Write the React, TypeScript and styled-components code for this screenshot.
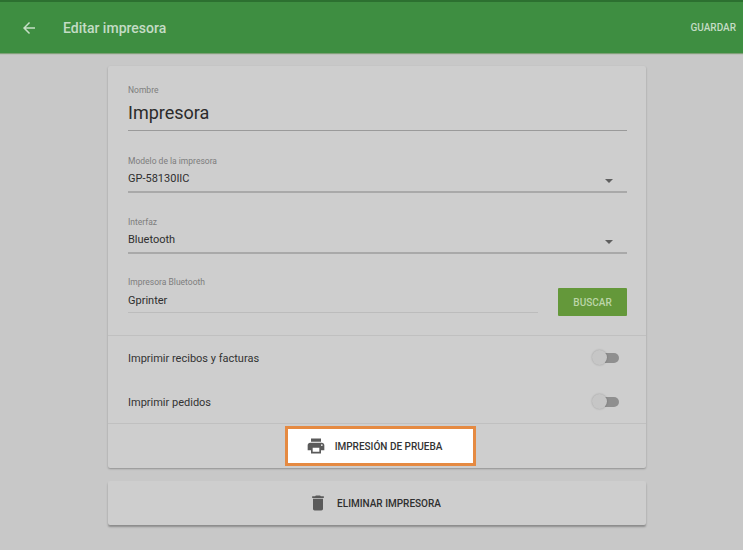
import React from "react";
import styled, { createGlobalStyle } from "styled-components";

const GlobalStyle = createGlobalStyle`
  html, body {
    margin: 0;
    padding: 0;
    height: 100%;
    overflow: hidden;
    background: #c8c8c8;
    font-family: Roboto, "Liberation Sans", sans-serif;
  }
`;

const Page = styled.div`
  width: 743px;
  height: 550px;
  display: flex;
  flex-direction: column;
  background: linear-gradient(#c4c4c8 0, #c8c8c8 30px);
`;

const TopBar = styled.header`
  height: 51px;
  flex: none;
  display: flex;
  align-items: center;
  background: #3e8e41;
  border-top: 2px solid #2c7030;
  box-shadow: 0 1px 1px rgba(110, 150, 100, 0.8);
`;

const BackButton = styled.div`
  width: 63px;
  padding-left: 20px;
  box-sizing: border-box;
  display: flex;
  color: #c6dfc6;
`;

const Title = styled.div`
  flex: 1;
  font-size: 14px;
  font-weight: 500;
  color: #c4dcc5;
`;

const SaveAction = styled.div`
  font-size: 10px;
  font-weight: 500;
  color: #c4dcc5;
  padding-right: 7px;
`;

const Content = styled.main`
  width: 538px;
  margin: 13px 0 0 108px;
  display: flex;
  flex-direction: column;
  gap: 13px;
`;

const Card = styled.section`
  background: #cecece;
  border-radius: 2px;
  box-shadow: 0 1px 2px rgba(0, 0, 0, 0.28);
`;

const Fields = styled.div`
  padding: 19px 19px 0 20px;
  height: 250px;
  border-bottom: 1px solid #c0c0c0;
  display: flex;
  flex-direction: column;
`;

const Field = styled.div<{ $height: number }>`
  height: ${(p) => p.$height}px;
  flex: none;
  display: flex;
  flex-direction: column;
`;

const Label = styled.label`
  font-size: 8.5px;
  line-height: 10px;
  color: #7d7d7d;
`;

const NameInput = styled.div`
  font-size: 18px;
  line-height: 24px;
  margin-top: 6px;
  padding-bottom: 5px;
  color: #2b2b2b;
  border-bottom: 1px solid #9a9a9a;
`;

const SelectValue = styled.div`
  font-size: 11px;
  line-height: 14px;
  margin-top: 6px;
  padding-bottom: 5px;
  color: #2e2e2e;
  border-bottom: 2px solid #a9a9a9;
  display: flex;
  align-items: center;
  justify-content: space-between;
`;

const Caret = styled.span`
  width: 0;
  height: 0;
  margin: 3px 14px 0 0;
  border-left: 4px solid transparent;
  border-right: 4px solid transparent;
  border-top: 4px solid #5f5f5f;
`;

const BluetoothRow = styled.div`
  display: flex;
  align-items: flex-start;
  gap: 20px;
`;

const BluetoothField = styled.div`
  flex: 1;
  display: flex;
  flex-direction: column;
`;

const TextValue = styled.div`
  font-size: 11px;
  line-height: 14px;
  margin-top: 7px;
  padding-bottom: 4px;
  color: #2e2e2e;
  border-bottom: 1px solid #bcbcbc;
`;

const SearchButton = styled.button`
  width: 69px;
  height: 28px;
  margin-top: 11px;
  border: 0;
  border-radius: 1px;
  background: #64983a;
  color: #bcd6a8;
  font-family: inherit;
  font-size: 10px;
  font-weight: 500;
  padding: 0;
`;

const Toggles = styled.div`
  padding: 0 19px 0 20px;
  height: 87px;
  border-bottom: 1px solid #c0c0c0;
  display: flex;
  flex-direction: column;
`;

const ToggleRow = styled.div`
  height: 44px;
  flex: none;
  display: flex;
  align-items: center;
  justify-content: space-between;
  font-size: 11px;
  color: #333;
`;

const Switch = styled.span`
  position: relative;
  width: 20px;
  height: 10px;
  margin-right: 8px;
  border-radius: 5px;
  background: #8f8f8f;

  &::before {
    content: "";
    position: absolute;
    left: -7px;
    top: -3px;
    width: 15px;
    height: 15px;
    border-radius: 50%;
    background: #c6c6c6;
    box-shadow: 0 0 2px rgba(0, 0, 0, 0.25);
  }
`;

const TestFooter = styled.div`
  height: 44px;
  display: flex;
  justify-content: center;
  padding: 2px 0 0 6px;
  box-sizing: border-box;
`;

const TestButton = styled.div`
  width: 191px;
  height: 40px;
  flex: none;
  box-sizing: border-box;
  border: 3px solid #e58a42;
  background: #fff;
  padding-right: 12px;
  display: flex;
  align-items: center;
  justify-content: center;
  gap: 9px;
  font-size: 10px;
  font-weight: 500;
  color: #333;
`;

const DeleteCard = styled(Card)`
  height: 44px;
  padding-right: 5px;
  box-sizing: border-box;
  display: flex;
  align-items: center;
  justify-content: center;
  gap: 9px;
  font-size: 10px;
  font-weight: 500;
  color: #2f2f2f;
  box-shadow: 0 2px 2px rgba(0, 0, 0, 0.3);
`;

const ArrowIcon = () => (
  <svg width="18" height="18" viewBox="0 0 24 24" fill="currentColor">
    <path d="M20 11H7.83l5.59-5.59L12 4l-8 8 8 8 1.41-1.41L7.83 13H20v-2z" />
  </svg>
);

const PrintIcon = () => (
  <svg width="20" height="20" viewBox="0 0 24 24" fill="#5a5a5a">
    <path d="M19 8H5c-1.66 0-3 1.34-3 3v6h4v4h12v-4h4v-6c0-1.66-1.34-3-3-3zm-3 11H8v-5h8v5zm3-7c-.55 0-1-.45-1-1s.45-1 1-1 1 .45 1 1-.45 1-1 1zm-1-9H6v4h12V3z" />
  </svg>
);

const TrashIcon = () => (
  <svg width="20" height="20" viewBox="0 0 24 24" fill="#5a5a5a">
    <path d="M6 19c0 1.1.9 2 2 2h8c1.1 0 2-.9 2-2V7H6v12zM19 4h-3.5l-1-1h-5l-1 1H5v2h14V4z" />
  </svg>
);

export default function App() {
  return (
    <Page>
      <GlobalStyle />
      <TopBar>
        <BackButton>
          <ArrowIcon />
        </BackButton>
        <Title>Editar impresora</Title>
        <SaveAction>GUARDAR</SaveAction>
      </TopBar>
      <Content>
        <Card>
          <Fields>
            <Field $height={71}>
              <Label>Nombre</Label>
              <NameInput>Impresora</NameInput>
            </Field>
            <Field $height={61}>
              <Label>Modelo de la impresora</Label>
              <SelectValue>
                GP-58130IIC
                <Caret />
              </SelectValue>
            </Field>
            <Field $height={60}>
              <Label>Interfaz</Label>
              <SelectValue>
                Bluetooth
                <Caret />
              </SelectValue>
            </Field>
            <BluetoothRow>
              <BluetoothField>
                <Label>Impresora Bluetooth</Label>
                <TextValue>Gprinter</TextValue>
              </BluetoothField>
              <SearchButton>BUSCAR</SearchButton>
            </BluetoothRow>
          </Fields>
          <Toggles>
            <ToggleRow>
              Imprimir recibos y facturas
              <Switch />
            </ToggleRow>
            <ToggleRow>
              Imprimir pedidos
              <Switch />
            </ToggleRow>
          </Toggles>
          <TestFooter>
            <TestButton>
              <PrintIcon />
              IMPRESIÓN DE PRUEBA
            </TestButton>
          </TestFooter>
        </Card>
        <DeleteCard>
          <TrashIcon />
          ELIMINAR IMPRESORA
        </DeleteCard>
      </Content>
    </Page>
  );
}
